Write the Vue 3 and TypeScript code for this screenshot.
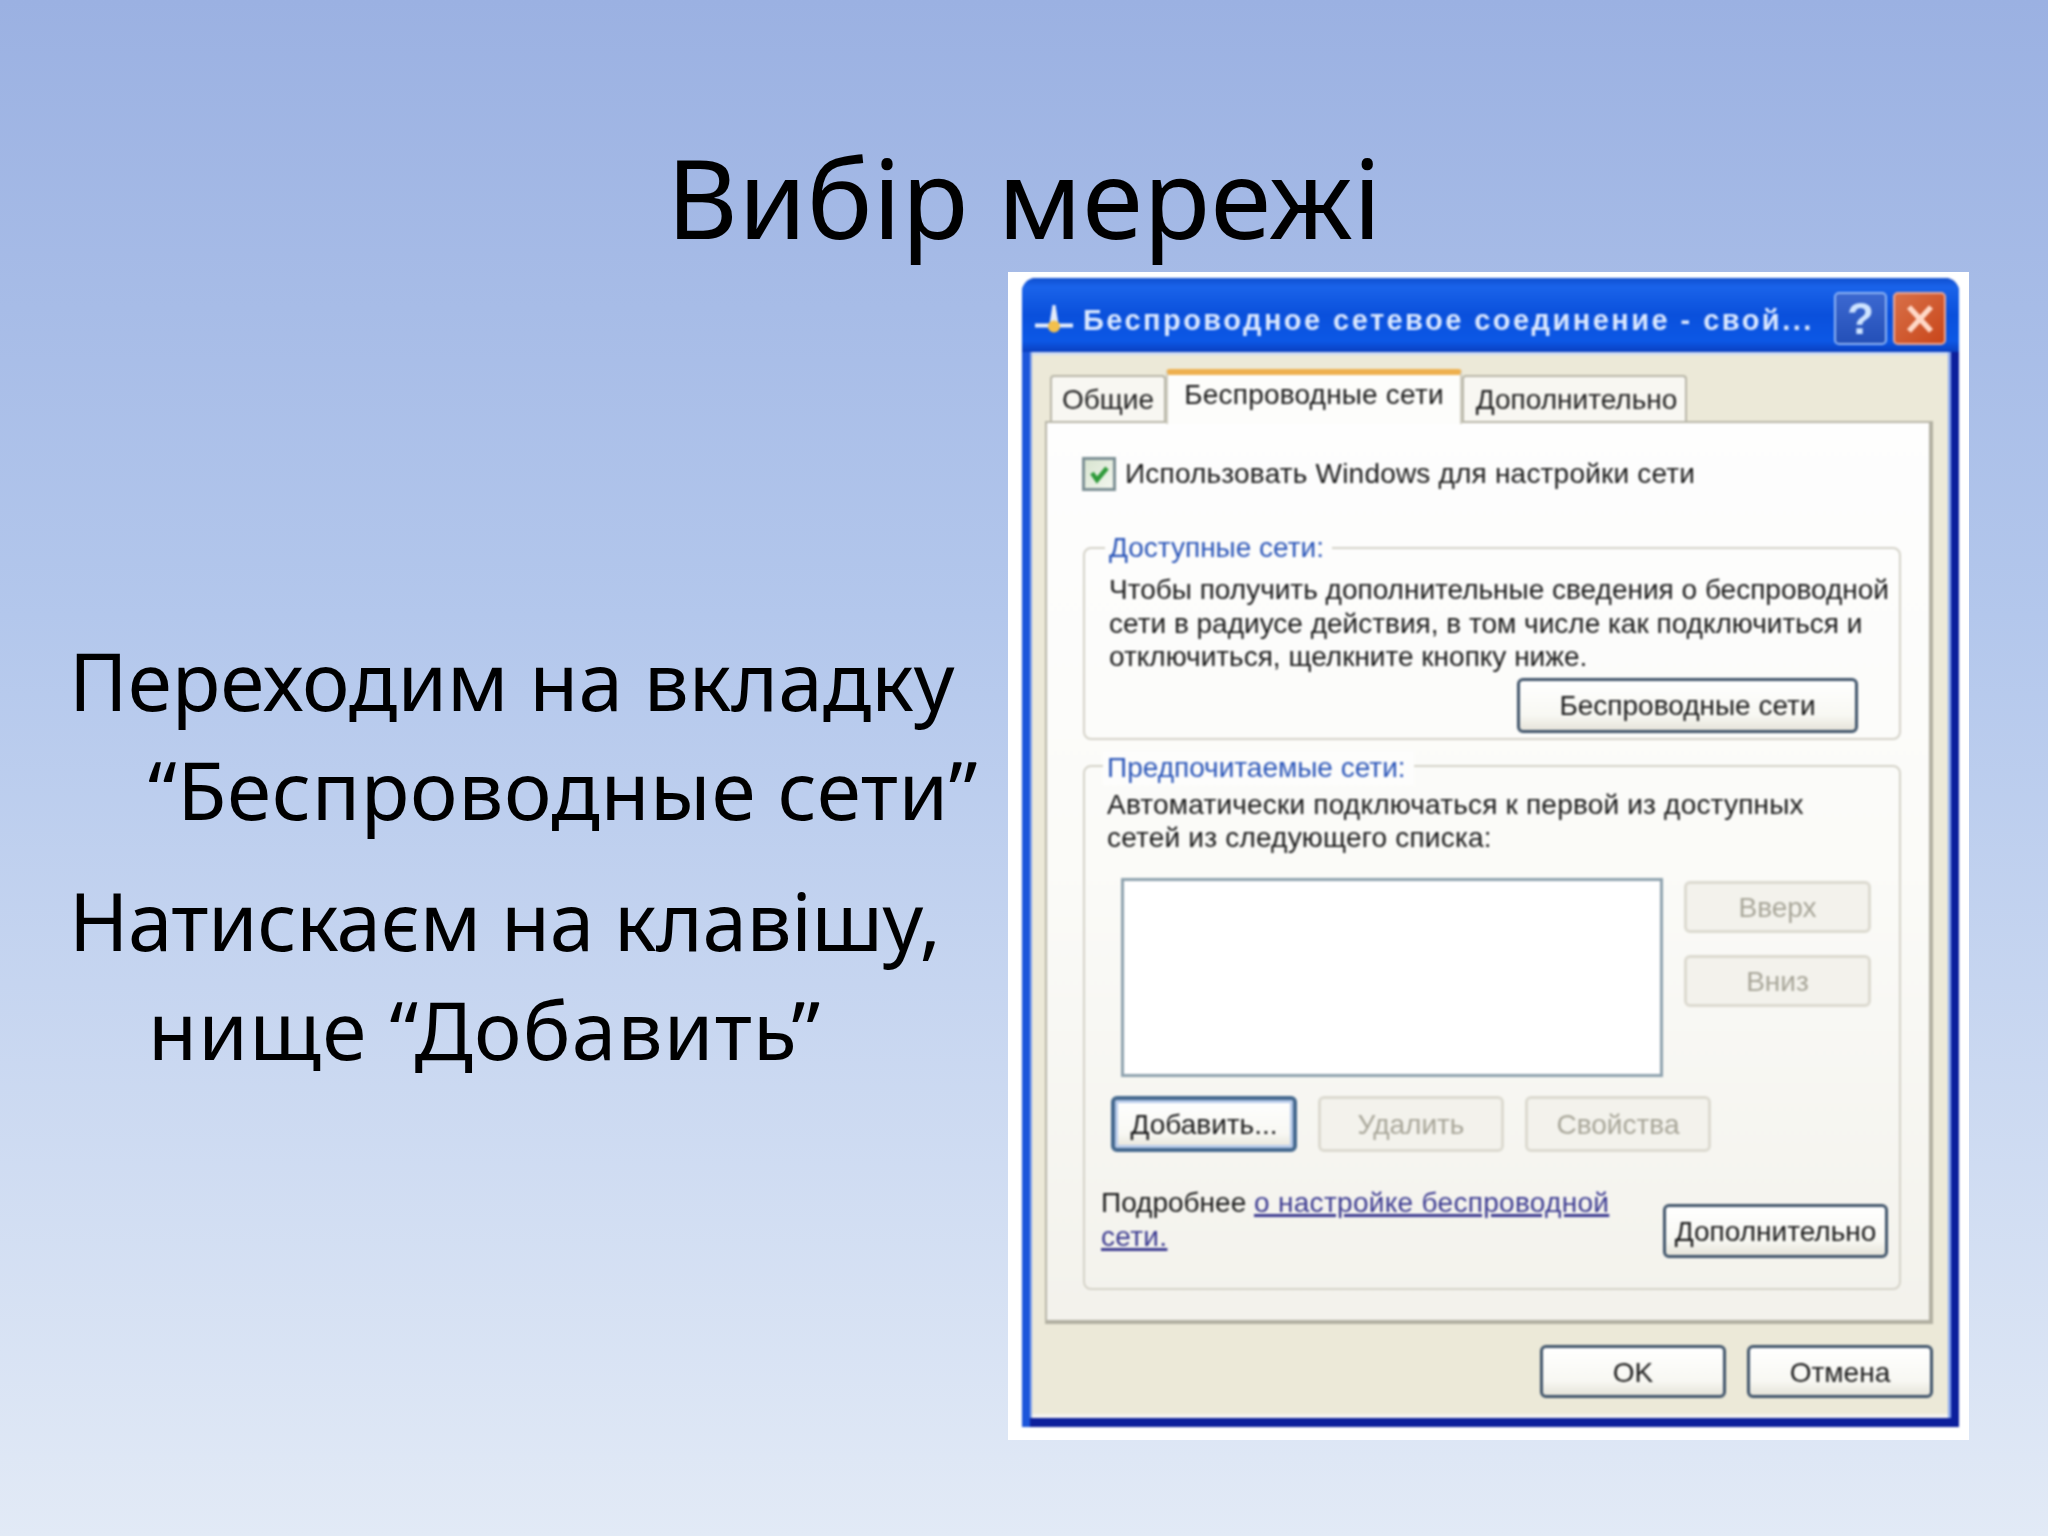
<script setup lang="ts">
const bullets: { a: string; b: string; ca: string; cb: string }[] = [
  { a: 'Переходим на вкладку', b: '“Беспроводные сети”', ca: '', cb: 'wide1' },
  { a: 'Натискаєм на клавішу,', b: 'нище “Добавить”', ca: 'tight', cb: 'wide2' },
]
</script>

<template>
  <div class="slide">
    <h1 class="title">Вибір мережі</h1>
    <div class="content">
      <div class="bullets">
        <p v-for="(l, i) in bullets" :key="i" class="bullet">
          <span class="first" :class="l.ca">{{ l.a }}</span>
          <span class="second" :class="l.cb">{{ l.b }}</span>
        </p>
      </div>
      <div class="frame">
        <div class="dialog">
          <div class="titlebar">
            <svg class="net" width="40" height="32" viewBox="0 0 40 32">
              <path d="M1 22.5h38" stroke="#e8f0ff" stroke-width="4" />
              <path d="M18.5 2h3l3 19h-9z" fill="#e4ecfa" />
              <circle cx="20" cy="23.5" r="6" fill="#f2c04c" />
            </svg>
            <span class="cap">Беспроводное сетевое соединение - свой...</span>
            <div class="tb-btn help">?</div>
            <div class="tb-btn close">
              <svg width="30" height="32" viewBox="0 0 30 32">
                <path d="M4 4 26 28M26 4 4 28" stroke="#ffd9c8" stroke-width="5.5" />
              </svg>
            </div>
          </div>
          <div class="client">
            <div class="tabs">
              <div class="tab t1">Общие</div>
              <div class="tab t2">Беспроводные сети</div>
              <div class="tab t3">Дополнительно</div>
            </div>
            <div class="panel">
              <div class="check-row">
                <span class="check">
                  <svg width="24" height="22" viewBox="0 0 24 22">
                    <path d="M5 10l5 7L20 5" fill="none" stroke="#2f9a3a" stroke-width="4.5" />
                  </svg>
                </span>
                <span class="check-label">Использовать Windows для настройки сети</span>
              </div>

              <div class="group g1">
                <span class="legend l1">Доступные сети:</span>
                <p class="txt a1">Чтобы получить дополнительные сведения о беспроводной<br />сети в радиусе действия, в том числе как подключиться и<br />отключиться, щелкните кнопку ниже.</p>
                <div class="g1-foot"><div class="btn wifi">Беспроводные сети</div></div>
              </div>

              <div class="group g2">
                <span class="legend l2">Предпочитаемые сети:</span>
                <p class="txt a2">Автоматически подключаться к первой из доступных<br />сетей из следующего списка:</p>
                <div class="list-row">
                  <div class="listbox"></div>
                  <div class="side">
                    <div class="btn off side-btn">Вверх</div>
                    <div class="btn off side-btn">Вниз</div>
                  </div>
                </div>
                <div class="actions">
                  <div class="btn focus act">Добавить...</div>
                  <div class="btn off act">Удалить</div>
                  <div class="btn off act">Свойства</div>
                </div>
                <div class="more">
                  <p class="txt more-text">Подробнее <span class="link">о настройке беспроводной</span><br /><span class="link">сети.</span></p>
                  <div class="btn adv">Дополнительно</div>
                </div>
              </div>
            </div>
            <div class="footer">
              <div class="btn act-f">OK</div>
              <div class="btn act-f">Отмена</div>
            </div>
          </div>
        </div>
      </div>
    </div>
  </div>
</template>

<style scoped>
.slide {
  width: 2048px;
  height: 1536px;
  overflow: hidden;
  background: linear-gradient(180deg, #9bb1e2 0%, #b3c7ec 40%, #e2eaf6 100%);
  font-family: "Noto Sans", "Open Sans", sans-serif;
  color: #000;
  display: flex;
  flex-direction: column;
}
.title {
  margin: 0;
  height: 272px;
  box-sizing: border-box;
  padding-top: 126px;
  text-align: center;
  font-weight: 400;
  font-size: 110px;
  line-height: 140px;
  letter-spacing: 0.3px;
}
.content {
  display: flex;
  align-items: flex-start;
}
.bullets {
  width: 1008px;
  box-sizing: border-box;
  padding: 353px 0 0 69px;
  font-size: 80px;
  line-height: 109px;
}
.bullet {
  margin: 0 0 22px;
  white-space: nowrap;
}
.first,
.second {
  display: block;
}
.second {
  padding-left: 79px;
}
.tight {
  letter-spacing: -0.45px;
}
.wide1 {
  letter-spacing: 0.6px;
}
.wide2 {
  letter-spacing: 1.2px;
}
.frame {
  width: 961px;
  height: 1168px;
  box-sizing: border-box;
  background: #fff;
  padding: 6px 10px 13px 14px;
}
.dialog {
  height: 1149px;
  border-radius: 14px 14px 0 0;
  background: linear-gradient(90deg, #1c56da 8px, #0c1f9c 8px);
  display: flex;
  flex-direction: column;
  font-family: "Liberation Sans", Arial, sans-serif;
  filter: blur(0.8px);
  overflow: hidden;
}
.titlebar {
  height: 74px;
  flex: none;
  box-sizing: border-box;
  padding: 14px 13px 7px 12px;
  display: flex;
  align-items: center;
  background: linear-gradient(180deg, #0f4fd0 0%, #1a63ea 12%, #0a50dc 50%, #0c58e6 85%, #0a3fc0 100%);
}
.net {
  flex: none;
  margin-right: 9px;
}
.cap {
  flex: 1;
  padding-top: 3px;
  color: #dbe8ff;
  font-weight: 700;
  font-size: 29px;
  letter-spacing: 2.45px;
  white-space: nowrap;
}
.tb-btn {
  width: 53px;
  height: 53px;
  box-sizing: border-box;
  border-radius: 5px;
  display: flex;
  align-items: center;
  justify-content: center;
  flex: none;
}
.help {
  background: linear-gradient(180deg, #3c68d0, #2450b8);
  border: 2px solid #8fb4f4;
  color: #cfe4ff;
  font-size: 44px;
  font-weight: 700;
  margin-right: 6px;
}
.close {
  background: linear-gradient(135deg, #d87048, #c9461a);
  border: 2px solid #eba898;
}
.client {
  flex: 1;
  margin: 0 8px 9px 8px;
  background: #ece9d8;
  box-shadow: inset 2px 0 #86a4e8, inset -3px 0 #8aa8ee, inset 0 -4px #f4f3ee, inset 0 3px #cfdcf2;
  padding: 16px 18px 0 15px;
  display: flex;
  flex-direction: column;
}
.tabs {
  display: flex;
  align-items: flex-end;
  height: 53px;
  margin-left: 5px;
  position: relative;
  z-index: 1;
  font-size: 28px;
  color: #222;
}
.tab {
  box-sizing: border-box;
  white-space: nowrap;
  background: #f8f7f2;
  border: 2px solid #b8b6a8;
  border-bottom: 0;
  border-radius: 4px 4px 0 0;
  text-align: center;
}
.t1 {
  width: 116px;
  height: 46px;
  line-height: 46px;
}
.t2 {
  width: 296px;
  height: 55px;
  margin-bottom: -3px;
  line-height: 40px;
  letter-spacing: 0.2px;
  background: #fdfdfb;
  border: 0;
  border-top: 6px solid #eeb04e;
  border-left: 2px solid #cfcdc0;
  border-right: 2px solid #cfcdc0;
  color: #1a1a1a;
}
.t3 {
  width: 225px;
  height: 46px;
  line-height: 46px;
  padding-left: 4px;
}
.panel {
  height: 903px;
  box-sizing: border-box;
  border: 2px solid #b8b6a8;
  border-right: 4px solid #b2b0a2;
  border-bottom: 4px solid #b2b0a2;
  background: linear-gradient(180deg, #fefefe 0%, #fbfbf8 50%, #f3f2ec 100%);
  padding: 34px 28px 0 35px;
}
.check-row {
  display: flex;
  align-items: center;
  height: 34px;
  margin-bottom: 56px;
}
.check {
  width: 34px;
  height: 34px;
  box-sizing: border-box;
  border: 3px solid #7c8f94;
  background: linear-gradient(135deg, #d8e4d0, #f2f6ee);
  display: flex;
  align-items: center;
  justify-content: center;
  margin-right: 9px;
}
.check-label,
.txt {
  font-size: 28px;
  color: #1a1a1a;
  white-space: nowrap;
}
.check-label {
  letter-spacing: 0.2px;
}
.group {
  position: relative;
  box-sizing: border-box;
  width: 818px;
  margin-left: 1px;
  border: 2px solid #d4d2c8;
  border-radius: 8px;
}
.g1 {
  height: 193px;
  padding: 24px 0 0 24px;
  margin-bottom: 25px;
}
.g2 {
  height: 525px;
  padding: 21px 0 0 22px;
}
.legend {
  position: absolute;
  background: #fdfdfc;
  padding: 0 8px 0 4px;
  font-size: 28px;
  line-height: 34px;
  color: #2a55b8;
  white-space: nowrap;
}
.l1 {
  left: 20px;
  top: -18px;
}
.l2 {
  left: 18px;
  top: -16px;
}
.txt {
  margin: 0;
  line-height: 33.5px;
}
.a2 {
  line-height: 33px;
  letter-spacing: 0.2px;
}
.g1-foot {
  display: flex;
  justify-content: flex-end;
  margin-top: 4px;
  padding-right: 41px;
}
.btn {
  box-sizing: border-box;
  display: flex;
  align-items: center;
  justify-content: center;
  padding-top: 2px;
  font-size: 28px;
  color: #1a1a1a;
  white-space: nowrap;
  border: 3px solid #40546a;
  border-radius: 6px;
  background: linear-gradient(180deg, #ffffff 0%, #f8f8f3 70%, #e6e4da 100%);
}
.off {
  border: 3px solid #dcdad0;
  background: #f3f2ec;
  color: #a8a699;
}
.focus {
  border: 4px solid #44688e;
  box-shadow: inset 0 0 0 3px #b8cbea;
}
.wifi {
  width: 341px;
  height: 55px;
}
.list-row {
  display: flex;
  margin: 24px 0 0 14px;
}
.listbox {
  width: 542px;
  height: 199px;
  box-sizing: border-box;
  background: #fff;
  border: 3px solid #8ea2ae;
}
.side {
  display: flex;
  flex-direction: column;
  gap: 22px;
  margin: 3px 0 0 21px;
}
.side-btn {
  width: 187px;
  height: 52px;
}
.actions {
  display: flex;
  gap: 21px;
  margin: 19px 0 0 4px;
}
.act {
  width: 186px;
  height: 56px;
}
.more {
  display: flex;
  justify-content: space-between;
  align-items: flex-start;
  margin: 34px 0 0 -6px;
  width: 787px;
}
.link {
  color: #3b3a90;
  letter-spacing: 0.3px;
  text-decoration: underline;
  text-decoration-thickness: 2.5px;
}
.adv {
  width: 225px;
  height: 54px;
  margin-top: 18px;
}
.footer {
  display: flex;
  justify-content: flex-end;
  gap: 21px;
  margin-top: 21px;
}
.act-f {
  width: 186px;
  height: 53px;
}
</style>

<style>
html,
body {
  margin: 0;
}
</style>
